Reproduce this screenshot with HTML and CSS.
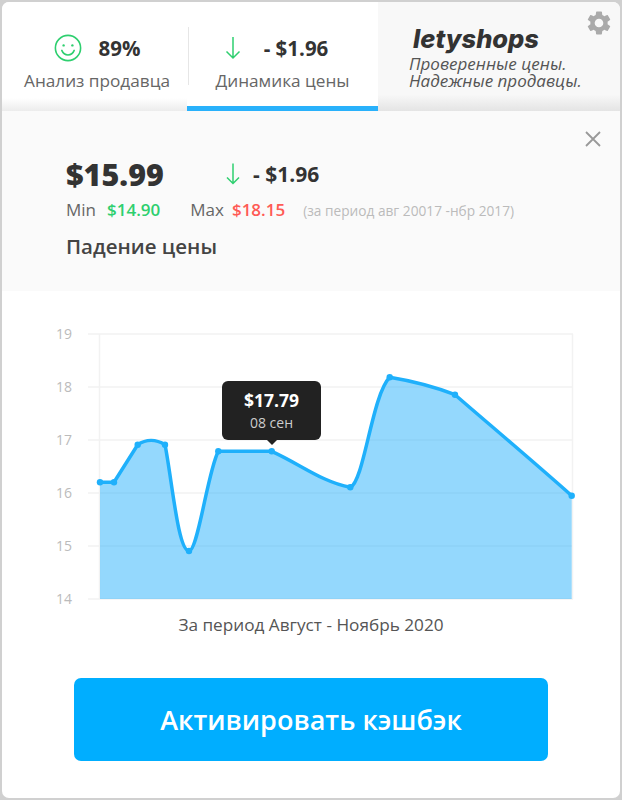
FILE: index.html
```html
<!DOCTYPE html>
<html lang="ru">
<head>
  <meta charset="UTF-8" />
  <title>letyshops</title>
  <link rel="stylesheet" href="styles.css">
</head>
<body>

  <div class="popup">
    <header class="top">
      <div class="tab tab-seller">
        <div class="tab-value">
          <svg class="smile" viewBox="0 0 28 28" width="28" height="28">
            <circle cx="14" cy="14" r="12.6" fill="none" stroke="#2ecf6f" stroke-width="1.6" />
            <circle cx="9.6" cy="11.4" r="1.2" fill="#2ecf6f" />
            <circle cx="18.4" cy="11.4" r="1.2" fill="#2ecf6f" />
            <path d="M7.8 16.4c1.2 3 3.4 4.6 6.2 4.6s5-1.600 6.200-4.600" fill="none" stroke="#2ecf6f" stroke-width="1.600" stroke-linecap="round" />
          </svg>
          <b>89%</b>
        </div>
        <div class="tab-label">Анализ продавца</div>
      </div>
      <div class="tab tab-price">
        <div class="tab-value">
          <svg class="arrow" viewBox="0 0 16 24" width="16" height="24">
            <path d="M8 1v21M1.500 15.500L8 22l6.500-6.500" fill="none" stroke="#2ecf6f" stroke-width="1.500" />
          </svg>
          <b>- $1.96</b>
        </div>
        <div class="tab-label">Динамика цены</div>
      </div>
      <div class="promo">
        <div class="logo">letyshops</div>
        <div class="slogan">Проверенные цены.<br>Надежные продавцы.</div>
        <svg class="gear" viewBox="2 2 20 20" width="24" height="24">
          <path fill="#aaaaaa" d="M19.140 12.940c.04-.3.06-.61.06-.94 0-.32-.02-.64-.07-.94l2.030-1.580c.18-.14.23-.41.12-.61l-1.920-3.320c-.12-.22-.37-.29-.59-.22l-2.390.96c-.5-.38-1.030-.7-1.620-.94l-.36-2.540c-.04-.24-.24-.41-.48-.41h-3.840c-.24 0-.43.17-.47.41l-.36 2.540c-.59.24-1.130.57-1.620.94l-2.390-.96c-.22-.08-.47 0-.59.22L2.740 8.870c-.12.21-.08.47.12.61l2.030 1.580c-.05.3-.09.63-.09.94s.02.64.07.94l-2.030 1.580c-.18.14-.23.41-.12.61l1.920 3.320c.12.22.37.29.59.22l2.390-.96c.5.38 1.030.7 1.620.94l.36 2.540c.05.24.24.41.48.41h3.840c.24 0 .44-.17.47-.41l.36-2.540c.59-.24 1.130-.56 1.620-.94l2.390.96c.22.08.47 0 .59-.22l1.920-3.320c.12-.22.07-.47-.12-.61l-2.010-1.580zM12 15.600c-1.980 0-3.600-1.620-3.600-3.600s1.620-3.600 3.600-3.600 3.600 1.620 3.600 3.600-1.620 3.600-3.600 3.600z" />
        </svg>
      </div>
    </header>

    <section class="price-panel">
      <svg class="close" viewBox="0 0 16 16" width="16" height="16">
        <path d="M1 1l14 14M15 1L1 15" fill="none" stroke="#999999" stroke-width="1.800" />
      </svg>
      <div class="price-row">
        <div class="price">$15.99</div>
        <svg class="arrow" viewBox="0 0 16 24" width="16" height="24">
          <path d="M8 1.500v20M2 15.500l6 6 6-6" fill="none" stroke="#2ecf6f" stroke-width="1.500" />
        </svg>
        <b class="price-diff">- $1.96</b>
      </div>
      <div class="range-row">
        <span class="range-name">Min</span>
        <span class="range-min">$14.90</span>
        <span class="range-name range-max-name">Max</span>
        <span class="range-max">$18.15</span>
        <span class="range-note">(за период авг 20017 -нбр 2017)</span>
      </div>
      <div class="price-status">Падение цены</div>
    </section>

    <section class="chart">
      <svg class="chart-svg" viewBox="2 291 618 320" width="618" height="320">
        <g class="grid">
          <path d="M88 334H573M88 387H573M88 440H573M88 493H573M88 546H573M88 599H573M99.500 334V599M572.500 334V599" />
        </g>
        <g class="axis">
          <text x="56" y="339">19</text>
          <text x="56" y="392">18</text>
          <text x="56" y="445">17</text>
          <text x="56" y="498">16</text>
          <text x="56" y="551">15</text>
          <text x="56" y="604">14</text>
        </g>
        <path class="area" d="M100 482.300L114 482.300L137.700 444.700C146 439 156 439 165 444.700C172 480 178 551 189 551C198 551 208 470 218.300 451.300L271.700 451.300C300 464 322 482 350.300 487.300C364 482 372 395 389.700 377.300C412 381 435 387 455 394.700C490 425 535 463 571.700 495.700V599H100Z" />
        <path class="line" d="M100 482.300L114 482.300L137.700 444.700C146 439 156 439 165 444.700C172 480 178 551 189 551C198 551 208 470 218.300 451.300L271.700 451.300C300 464 322 482 350.300 487.300C364 482 372 395 389.700 377.300C412 381 435 387 455 394.700C490 425 535 463 571.700 495.700" />
        <g class="dots">
          <circle cx="100" cy="482.300" r="3.200" />
          <circle cx="114" cy="482.300" r="3.200" />
          <circle cx="137.700" cy="444.700" r="3.200" />
          <circle cx="165" cy="444.700" r="3.200" />
          <circle cx="189" cy="551" r="3.200" />
          <circle cx="218.300" cy="451.300" r="3.200" />
          <circle cx="271.700" cy="451.300" r="3.200" />
          <circle cx="350.300" cy="487.300" r="3.200" />
          <circle cx="389.700" cy="377.300" r="3.200" />
          <circle cx="455" cy="394.700" r="3.200" />
          <circle cx="571.700" cy="495.700" r="3.200" />
        </g>
      </svg>
      <div class="tooltip">
        <b>$17.79</b>
        <span>08 сен</span>
      </div>
    </section>

    <div class="chart-caption">За период Август - Ноябрь 2020</div>
    <div class="activate-wrap">
      <button type="button" class="activate-btn">Активировать кэшбэк</button>
    </div>
  </div>

</body>
</html>
```

FILE: styles.css
```css
* {
  box-sizing: border-box;
}
body {
  margin: 0;
  background: #d0d0d0;
  font-family: 'Open Sans', sans-serif;
  color: #333;
}
b {
  font-weight: 700;
}

.popup {
  width: 618px;
  height: 796px;
  margin: 2px;
  background: #fff;
  border-radius: 7px;
  overflow: hidden;
}

.top {
  display: flex;
  height: 109px;
}
.tab {
  display: flex;
  flex-direction: column;
  align-items: center;
  padding-top: 28px;
  background: linear-gradient(to bottom, #fff 88%, #ececec 100%);
}
.tab-seller {
  width: 185px;
  padding-left: 5px;
  position: relative;
}
.tab-seller::after {
  content: "";
  position: absolute;
  right: -2px;
  top: 25px;
  width: 1px;
  height: 58px;
  background: #e6e6e6;
}
.tab-price {
  width: 191px;
  background: #fff;
  border-bottom: 5px solid #29b1fb;
}
.tab-value {
  display: flex;
  align-items: center;
  height: 36px;
  font-size: 20.5px;
}
.tab-seller .tab-value {
  gap: 17px;
}
.tab-price .tab-value {
  gap: 23px;
  margin-left: -12px;
}
.tab-label {
  margin-top: 4px;
  font-size: 17.2px;
  line-height: 21px;
  color: #666;
}

.promo {
  flex: 1;
  position: relative;
  padding: 22px 0 0 31px;
  background: linear-gradient(to bottom, #f8f8f8 85%, #e4e4e4 100%);
}
.logo {
  margin-left: 4px;
  font-family: Inter, sans-serif;
  font-style: italic;
  font-weight: 800;
  font-size: 25.5px;
  line-height: 30px;
  color: #333;
}
.slogan {
  margin-top: 1px;
  font-style: italic;
  font-size: 17px;
  line-height: 17px;
  color: #555;
}
.gear {
  position: absolute;
  right: 9px;
  top: 9px;
}

.price-panel {
  position: relative;
  height: 180px;
  padding: 45px 0 0 64px;
  background: #fafafa;
}
.close {
  position: absolute;
  right: 19px;
  top: 20px;
}
.price-row {
  display: flex;
  align-items: center;
  height: 36px;
}
.price {
  width: 159px;
  font-size: 30.5px;
  font-weight: 800;
  color: #333;
}
.price-diff {
  margin-left: 12px;
  font-size: 21px;
}
.range-row {
  display: flex;
  align-items: baseline;
  margin-top: 6px;
  font-size: 17px;
  line-height: 24px;
}
.range-name {
  color: #666;
}
.range-min {
  margin-left: 11px;
  font-weight: 600;
  color: #2ecf6f;
}
.range-max-name {
  margin-left: 30px;
}
.range-max {
  margin-left: 8px;
  font-weight: 600;
  color: #ff5a55;
}
.range-note {
  margin-left: 18px;
  font-size: 13.7px;
  color: #bbb;
}
.price-status {
  margin-top: 9px;
  font-size: 20.500px;
  font-weight: 600;
  color: #444;
}

.chart {
  position: relative;
  height: 320px;
}
.chart-svg {
  display: block;
}
.grid path {
  fill: none;
  stroke: #f2f2f2;
  stroke-width: 1.500;
}
.axis text {
  font-family: 'Open Sans', sans-serif;
  font-size: 14px;
  fill: #bbb;
}
.area {
  fill: #29b1fb;
  fill-opacity: .5;
}
.line {
  fill: none;
  stroke: #1fb0fb;
  stroke-width: 3.500;
}
.dots circle {
  fill: #1fb0fb;
}

.tooltip {
  position: absolute;
  left: 220px;
  top: 90px;
  width: 99px;
  height: 59px;
  padding-top: 7px;
  display: flex;
  flex-direction: column;
  align-items: center;
  background: #222;
  border-radius: 6px;
  color: #fff;
}
.tooltip::after {
  content: "";
  position: absolute;
  left: 45px;
  bottom: -5px;
  border-left: 5px solid transparent;
  border-right: 5px solid transparent;
  border-top: 5px solid #222;
}
.tooltip b {
  font-size: 17.500px;
  line-height: 25px;
}
.tooltip span {
  font-size: 14px;
  line-height: 19px;
  color: #ccc;
}

.chart-caption {
  margin-top: 3px;
  text-align: center;
  font-size: 17.200px;
  line-height: 22px;
  color: #555;
}
.activate-wrap {
  padding: 42px 72px 0;
}
.activate-btn {
  display: block;
  width: 474px;
  height: 83px;
  border: none;
  border-radius: 7px;
  background: #00aeff;
  color: #fff;
  font-family: 'Open Sans', sans-serif;
  font-size: 27px;
  font-weight: 600;
}
```
